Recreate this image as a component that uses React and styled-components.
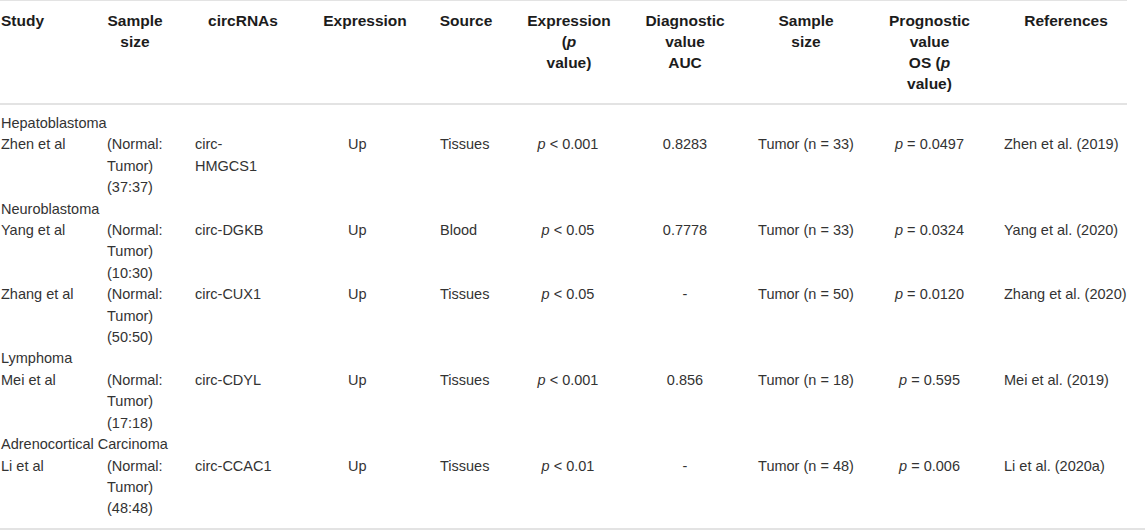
import React from 'react';
import styled, { createGlobalStyle } from 'styled-components';

const GlobalStyle = createGlobalStyle`
    body {
        margin: 0;
        background: #fff;
        font-family: "Liberation Sans", Arial, Helvetica, sans-serif;
    }
`;

const Wrapper = styled.div`
    width: 1145px;
    border-bottom: 2px solid #e3e3e3;
`;

const Table = styled.table`
    width: 1127px;
    table-layout: fixed;
    border-collapse: collapse;
    border-top: 1px solid #e3e3e3;

    tbody tr:first-child td {
        padding-top: 8px;
    }

    tbody tr:last-child td {
        padding-bottom: 8px;
    }
`;

const HeadRow = styled.tr`
    border-bottom: 2px solid #e3e3e3;
`;

const Th = styled.th`
    padding: 9px ${p => p.$pr || 0}px 9px ${p => p.$pl || 0}px;
    text-align: ${p => p.$align || 'center'};
    vertical-align: top;
    font-size: 15.5px;
    line-height: 21px;
    font-weight: bold;
    color: #1c1c1c;
    white-space: nowrap;
`;

const Td = styled.td`
    padding: 0 ${p => p.$pr || 0}px 0 ${p => p.$pl || 0}px;
    text-align: ${p => p.$align || 'left'};
    vertical-align: top;
    font-size: 14.5px;
    line-height: 21.4px;
    color: #333;
    white-space: nowrap;
`;

const Section = styled.td`
    padding: 0 0 0 1px;
    font-size: 14.5px;
    line-height: 21.4px;
    color: #333;
    white-space: nowrap;
`;

const I = styled.em`
    font-style: italic;
`;

const widths = [104, 82, 124, 110, 95, 110, 120, 122, 125, 135];

const groups = [
    {
        name: 'Hepatoblastoma',
        rows: [
            { study: 'Zhen et al', ratio: '(37:37)', circ: ['circ-', 'HMGCS1'], source: 'Tissues', p: '< 0.001', auc: '0.8283', n: '33', os: '0.0497', ref: 'Zhen et al. (2019)' },
        ],
    },
    {
        name: 'Neuroblastoma',
        rows: [
            { study: 'Yang et al', ratio: '(10:30)', circ: ['circ-DGKB'], source: 'Blood', p: '< 0.05', auc: '0.7778', n: '33', os: '0.0324', ref: 'Yang et al. (2020)' },
            { study: 'Zhang et al', ratio: '(50:50)', circ: ['circ-CUX1'], source: 'Tissues', p: '< 0.05', auc: '-', n: '50', os: '0.0120', ref: 'Zhang et al. (2020)' },
        ],
    },
    {
        name: 'Lymphoma',
        rows: [
            { study: 'Mei et al', ratio: '(17:18)', circ: ['circ-CDYL'], source: 'Tissues', p: '< 0.001', auc: '0.856', n: '18', os: '0.595', ref: 'Mei et al. (2019)' },
        ],
    },
    {
        name: 'Adrenocortical Carcinoma',
        rows: [
            { study: 'Li et al', ratio: '(48:48)', circ: ['circ-CCAC1'], source: 'Tissues', p: '< 0.01', auc: '-', n: '48', os: '0.006', ref: 'Li et al. (2020a)' },
        ],
    },
];

const lines = arr => arr.map((t, i) => (
    <React.Fragment key={i}>
        {i > 0 && <br />}
        {t}
    </React.Fragment>
));

export default function App() {
    return (
        <Wrapper>
            <GlobalStyle />
            <Table>
                <colgroup>
                    {widths.map((w, i) => <col key={i} style={{ width: w }} />)}
                </colgroup>
                <thead>
                    <HeadRow>
                        <Th $align="left" $pl={1}>Study</Th>
                        <Th $pr={20}>Sample<br />size</Th>
                        <Th $pr={10}>circRNAs</Th>
                        <Th>Expression</Th>
                        <Th $pr={3}>Source</Th>
                        <Th $pr={2}>Expression<br />(<I>p</I><br />value)</Th>
                        <Th>Diagnostic<br />value<br />AUC</Th>
                        <Th>Sample<br />size</Th>
                        <Th>Prognostic<br />value<br />OS (<I>p</I><br />value)</Th>
                        <Th $pl={13}>References</Th>
                    </HeadRow>
                </thead>
                <tbody>
                    {groups.map(g => (
                        <React.Fragment key={g.name}>
                            <tr>
                                <Section colSpan={10}>{g.name}</Section>
                            </tr>
                            {g.rows.map(r => (
                                <tr key={r.study}>
                                    <Td $pl={1}>{r.study}</Td>
                                    <Td $pl={3}>(Normal:<br />Tumor)<br />{r.ratio}</Td>
                                    <Td $pl={9}>{lines(r.circ)}</Td>
                                    <Td $pl={38}>Up</Td>
                                    <Td $pl={20}>{r.source}</Td>
                                    <Td $align="center" $pr={4}><I>p</I> {r.p}</Td>
                                    <Td $align="center">{r.auc}</Td>
                                    <Td $align="center">Tumor (n = {r.n})</Td>
                                    <Td $align="center"><I>p</I> = {r.os}</Td>
                                    <Td $pl={12}>{r.ref}</Td>
                                </tr>
                            ))}
                        </React.Fragment>
                    ))}
                </tbody>
            </Table>
        </Wrapper>
    );
}
